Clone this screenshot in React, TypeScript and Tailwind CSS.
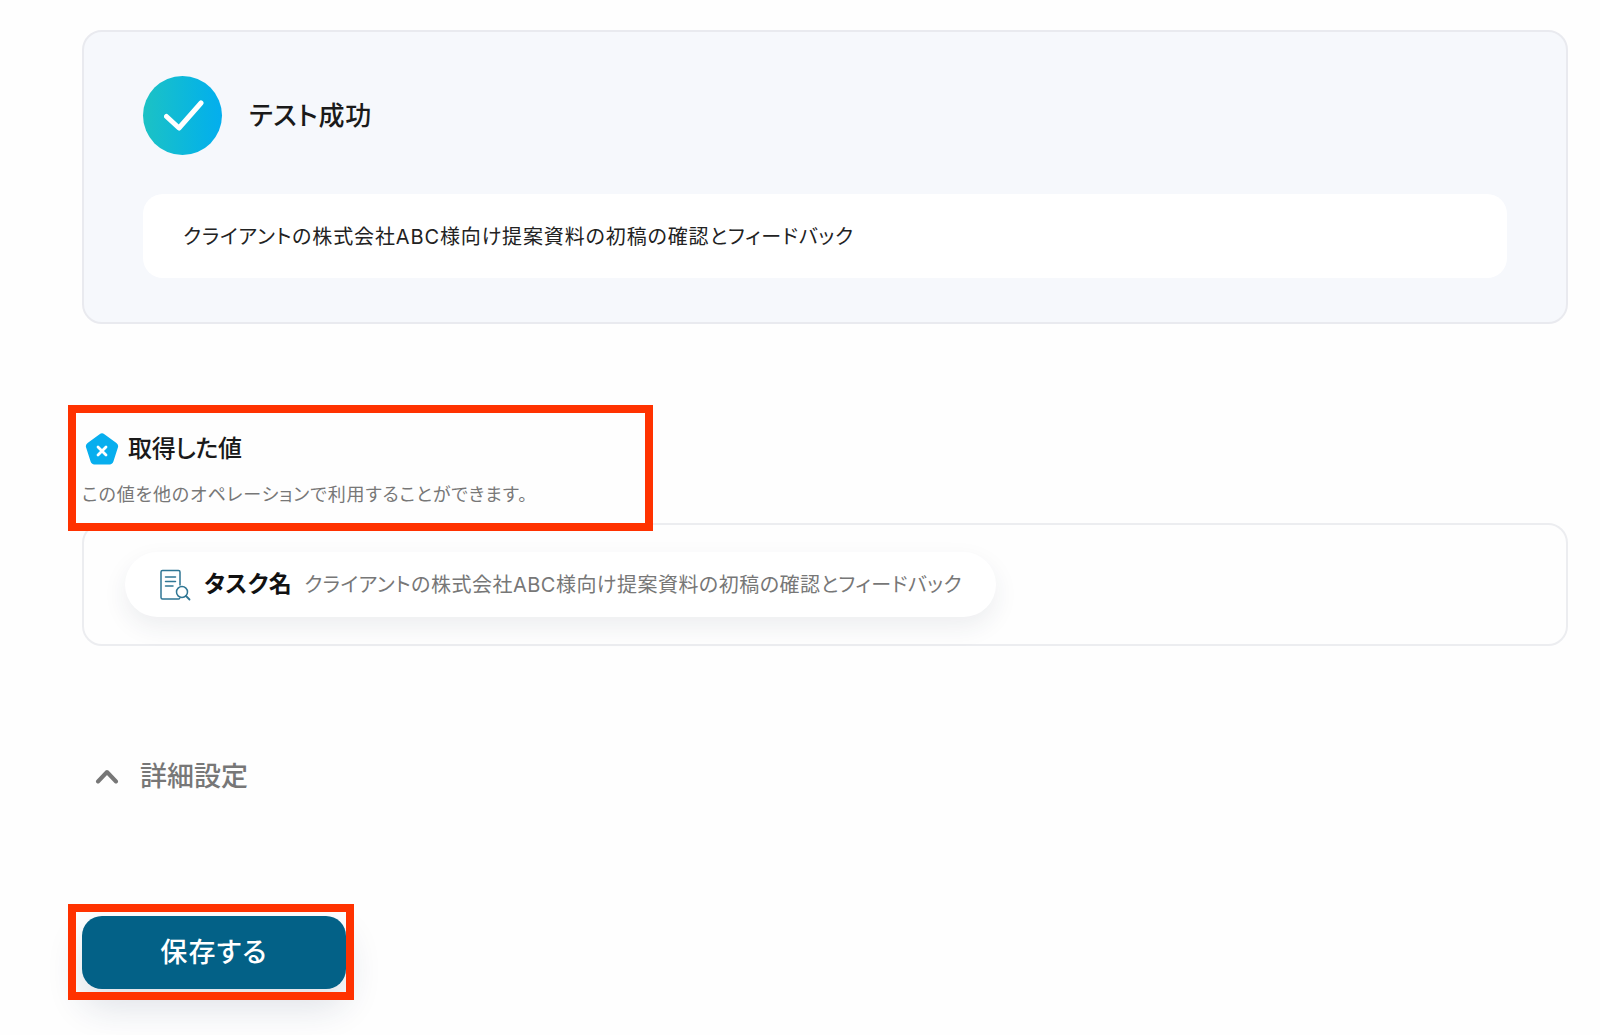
const FONT = "font-['Inter','Noto_Sans_CJK_JP',sans-serif]";

function CheckCircle() {
  return (
    <div className="flex h-[79px] w-[79px] shrink-0 items-center justify-center rounded-full bg-gradient-to-r from-[#1cc2c4] to-[#04aeee]">
      <svg className="ml-[3px]" width="40" height="32" viewBox="0 0 40 32" fill="none">
        <path d="M2.5 16.5 L15 28 L37 3" stroke="white" strokeWidth="5" strokeLinecap="round" strokeLinejoin="round" />
      </svg>
    </div>
  );
}

function ValueIcon() {
  return (
    <svg width="34" height="33" viewBox="0 0 34 33">
      <path
        d="M14.6 1.2 a4 4 0 0 1 4.8 0 L31.4 10 a4 4 0 0 1 1.5 4.5 L28.4 28.6 a4 4 0 0 1 -3.9 2.8 H9.5 a4 4 0 0 1 -3.9 -2.8 L1.1 14.5 A4 4 0 0 1 2.6 10 Z"
        fill="#07aeee"
      />
      <path d="M13 14 L21 22 M21 14 L13 22" stroke="white" strokeWidth="2.8" strokeLinecap="round" />
    </svg>
  );
}

function TaskIcon() {
  return (
    <svg width="31" height="32" viewBox="0 0 31 32" fill="none" stroke="#2f7694" strokeWidth="1.5" strokeLinecap="round">
      <path d="M20 16 V3 a1.5 1.5 0 0 0 -1.5 -1.5 H2.5 A1.5 1.5 0 0 0 1 3 V28.5 A1.5 1.5 0 0 0 2.5 30 H18.5 a1.5 1.5 0 0 0 1.2 -.6" />
      <path d="M5.5 8 H15.5 M5.5 12.5 H15.5 M5.5 17 H13" />
      <circle cx="22" cy="23" r="5.5" />
      <path d="M26 27 L29.5 30.5" strokeWidth="1.8" />
    </svg>
  );
}

function RedBox({ className }: { className: string }) {
  return <div className={`pointer-events-none absolute border-[8px] border-[#ff3200] ${className}`} />;
}

export default function App() {
  return (
    <div className={`${FONT} min-h-[1035px] bg-[#fefefe] pl-[82px] pr-8 pt-[30px] [font-feature-settings:'palt']`}>
      <div className="h-[294px] rounded-[20px] border-2 border-[#e9eaef] bg-[#f6f8fc] px-[59px] pt-[44px]">
        <div className="flex items-center gap-[27px]">
          <CheckCircle />
          <h2 className="text-[26px] font-medium tracking-[0.8px] text-[#1a1a1a]">テスト成功</h2>
        </div>
        <div className="mt-[39px] flex h-[84px] items-center rounded-[20px] bg-white px-10 pt-[2px] text-[20px] tracking-[0.88px] text-[#222]">
          クライアントの株式会社ABC様向け提案資料の初稿の確認とフィードバック
        </div>
      </div>

      <div className="relative mt-[81px] h-[93px]">
        <RedBox className="-left-[14px] top-0 h-[126px] w-[585px]" />
        <div className="flex items-center gap-[9px] pl-[3px] pt-[26px]">
          <ValueIcon />
          <h3 className="text-[24px] font-medium tracking-[-0.3px] text-[#1a1a1a]">取得した値</h3>
        </div>
        <p className="mt-[14px] text-[18px] tracking-[0.86px] text-[#777]">この値を他のオペレーションで利用することができます。</p>
      </div>

      <div className="mt-[25px] h-[123px] rounded-[20px] border-2 border-[#ecedf0] bg-[#fefefe] pl-[41px] pt-[27px]">
        <div className="flex h-[65px] w-[871px] items-center rounded-full bg-white pl-[35px] shadow-[0_10px_24px_rgba(40,50,80,0.08)]">
          <TaskIcon />
          <span className="ml-[13px] text-[23px] font-bold tracking-[0.5px] text-[#111]">タスク名</span>
          <span className="ml-[12px] text-[20px] tracking-[0.5px] text-[#777]">クライアントの株式会社ABC様向け提案資料の初稿の確認とフィードバック</span>
        </div>
      </div>

      <div className="mt-[111px] flex items-center gap-[21px] pl-[13px] text-[#777]">
        <svg className="-translate-y-px" width="24" height="16" viewBox="0 0 24 16" fill="none">
          <path d="M3 13.5 L12 4 L21 13.5" stroke="#777" strokeWidth="4" strokeLinecap="round" strokeLinejoin="round" />
        </svg>
        <span className="text-[27px] font-medium">詳細設定</span>
      </div>

      <div className="relative mt-[118px] w-[264px]">
        <RedBox className="-left-[14px] -top-[12px] h-[96px] w-[286px]" />
        <button className="flex h-[73px] w-[264px] items-center justify-center rounded-[20px] bg-[#036187] pt-[3px] text-[27px] font-medium tracking-[1.2px] text-white shadow-[0_18px_36px_rgba(30,50,90,0.14)]">
          保存する
        </button>
      </div>
    </div>
  );
}
